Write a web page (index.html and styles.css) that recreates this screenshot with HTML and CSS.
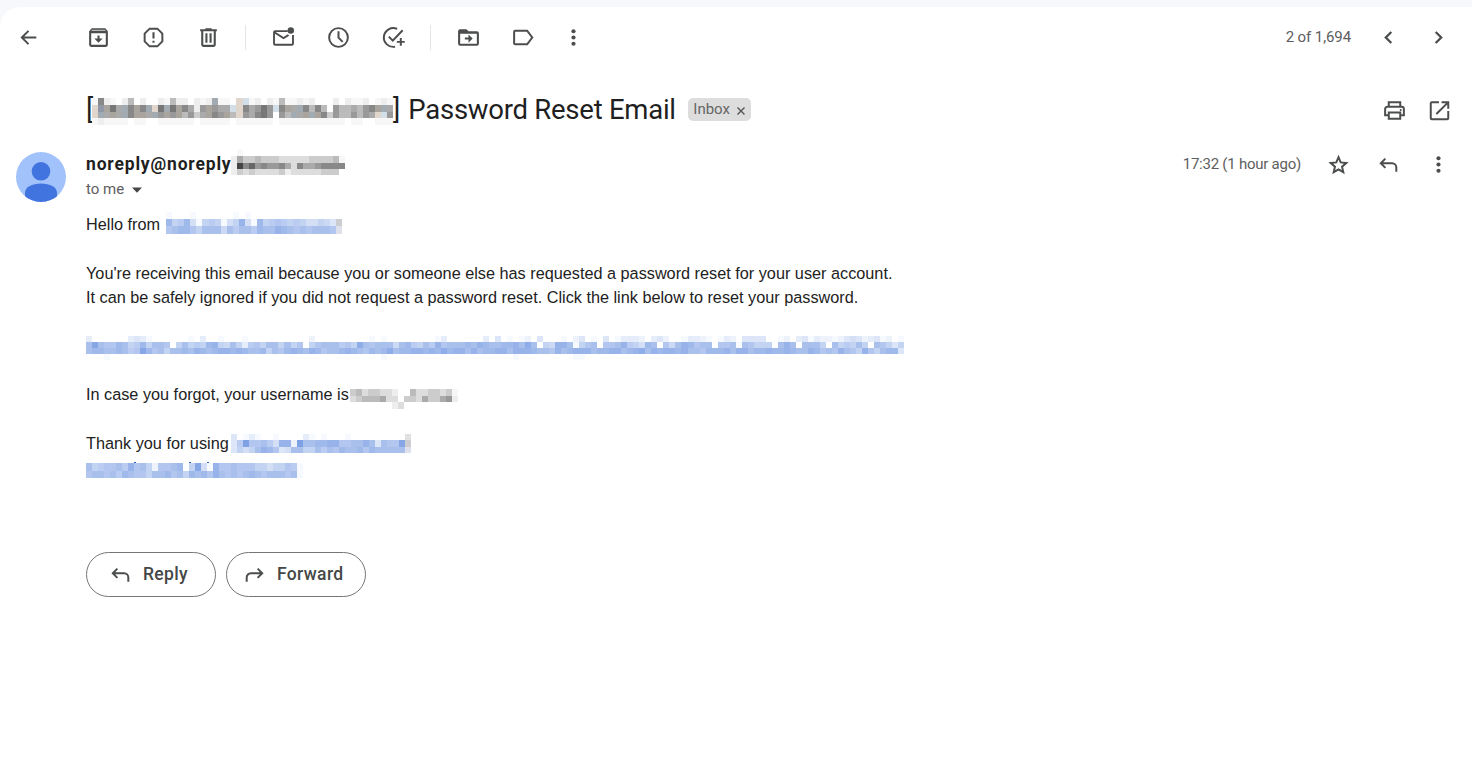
FILE: index.html
```html
<!DOCTYPE html>
<html lang="en">
<head>
<meta charset="utf-8">
<title>Password Reset Email</title>
<link rel="stylesheet" href="styles.css">
</head>
<body>
<main class="panel">
  <div class="toolbar">
    <svg class="icon back" viewBox="0 0 24 24"><path class="ln" d="M19.500 12H5.500M12 5.600 5.600 12l6.400 6.400"/></svg>
    <svg class="icon" viewBox="0 0 24 24"><path d="M5.500 3h13L21 6v13a2 2 0 0 1-2 2H5a2 2 0 0 1-2-2V6zM5 8v11h14V8zM11 10h2v3h3l-4 4-4-4h3z" fill-rule="evenodd"/><path d="M5.800 4.600h12.400l.8 1.200H5z" fill="#b5b8b5"/></svg>
    <svg class="icon" viewBox="0 0 24 24"><path class="ln" d="M8.300 3.500h7.400l4.800 4.800v7.400l-4.800 4.800H8.300l-4.800-4.800V8.300z"/><path d="M11 7h2v6h-2zM11 15h2v2h-2z"/></svg>
    <svg class="icon" viewBox="0 0 24 24"><path d="M9 3h6v1h5v2h-1v13a2 2 0 0 1-2 2H7a2 2 0 0 1-2-2V6H4V4h5zM7 6v13h10V6zM9 8h2v9H9zM13 8h2v9h-2z" fill-rule="evenodd"/></svg>
    <span class="sep"></span>
    <svg class="icon" viewBox="0 0 24 24"><path d="M16 5H4a2 2 0 0 0-2 2v11a2 2 0 0 0 2 2h16a2 2 0 0 0 2-2V9.500h-1.800V18H3.800V8.500L12 13.600l5.500-3.400-1.300-1.300L12 11.500 4.500 6.800H16z"/><circle cx="19" cy="5.200" r="3.100"/></svg>
    <svg class="icon" viewBox="0 0 24 24"><circle class="ln" cx="12" cy="12" r="9"/><path class="ln" d="M12 6v6.200l4 4"/></svg>
    <svg class="icon" viewBox="0 0 24 24"><path class="ln" d="M15.500 3.800A9 9 0 1 0 13.500 20.800M7.500 11.200l3.800 3.800L20.800 5"/><path class="ln" d="M19 12.500v7.500M15.200 16.200h7.600"/></svg>
    <span class="sep"></span>
    <svg class="icon" viewBox="0 0 24 24"><path d="M4 4h6l2 2h8a2 2 0 0 1 2 2v10a2 2 0 0 1-2 2H4a2 2 0 0 1-2-2V6a2 2 0 0 1 2-2zM4 8.500V18h16V8.500zM12 9l4 4-4 4v-3H8.500v-2H12z" fill-rule="evenodd"/></svg>
    <svg class="icon" viewBox="0 0 24 24"><path class="ln" d="M4 5.500h11.500l4.900 6.500-4.900 6.500H4a1 1 0 0 1-1-1v-11a1 1 0 0 1 1-1z"/></svg>
    <svg class="icon more" viewBox="0 0 24 24"><circle cx="12" cy="6" r="2"/><circle cx="12" cy="12" r="2"/><circle cx="12" cy="18" r="2"/></svg>
    <span class="count">2 of 1,694</span>
    <svg class="icon" viewBox="0 0 24 24"><path class="chev" d="M14.700 6.700 9.400 12l5.300 5.300"/></svg>
    <svg class="icon next" viewBox="0 0 24 24"><path class="chev" d="m9.300 6.700 5.300 5.300-5.300 5.300"/></svg>
  </div>

  <div class="subject">
    <h1><span>[</span><svg class="mosaic m-title" data-mosaic="title"></svg><span>]</span><span class="words">Password Reset Email</span></h1>
    <span class="chip"><span>Inbox</span><svg viewBox="0 0 10 10"><path d="m1.500 1.500 7 7m0-7-7 7"/></svg></span>
    <svg class="icon print" viewBox="0 0 24 24"><path class="ln" d="M6.500 8V4h11v4M6.500 16.500H3V10.500a2 2 0 0 1 2-2h14a2 2 0 0 1 2 2v6h-3.500M6.500 14h11v6h-11z"/><circle cx="18" cy="11.500" r="1"/></svg>
    <svg class="icon" viewBox="0 0 24 24"><path class="ln" d="M11.500 4H4.600a1 1 0 0 0-1 1v14.400a1 1 0 0 0 1 1h14.800a1 1 0 0 0 1-1V12.500M14 4h6.400v6.300M20 4.400 9 15.400"/></svg>
  </div>

  <div class="sender">
    <svg class="avatar" viewBox="0 0 50 50"><defs><clipPath id="disc"><circle cx="25" cy="25" r="25"/></clipPath></defs><g clip-path="url(#disc)"><path fill="#a1c2fa" d="M0 0h50v50H0z"/><circle cx="25" cy="19.300" r="9.300" fill="#4274e0"/><path fill="#4274e0" d="M9 50V41c0-6 7-9.500 16-9.500S41 35 41 41v9z"/></g></svg>
    <div class="who">
      <div class="from"><strong>noreply@noreply</strong><svg class="mosaic m-sender" data-mosaic="sender"></svg></div>
      <div class="to"><span>to me</span><svg viewBox="0 0 10 6"><path d="M0 .5h10L5 5.700z"/></svg></div>
    </div>
    <span class="time">17:32 (1 hour ago)</span>
    <svg class="icon star" viewBox="0 0 24 24"><path class="ln" d="m12 5 2.100 5 5.400.500-4.100 3.600 1.200 5.300L12 16.600l-4.600 2.800 1.200-5.300-4.100-3.600 5.400-.500z"/></svg>
    <svg class="icon" viewBox="0 0 24 24"><path class="ln" d="M9 6.400 4.600 10.800 9 15.200M4.900 10.800H15.500a4 4 0 0 1 4 4V19"/></svg>
    <svg class="icon" viewBox="0 0 24 24"><circle cx="12" cy="6" r="2"/><circle cx="12" cy="12" r="2"/><circle cx="12" cy="18" r="2"/></svg>
  </div>

  <div class="message">
    <p><span class="lead-hello">Hello from</span><svg class="mosaic m-hello" data-mosaic="hello"></svg></p>
    <p></p>
    <p>You're receiving this email because you or someone else has requested a password reset for your user account.</p>
    <p>It can be safely ignored if you did not request a password reset. Click the link below to reset your password.</p>
    <p></p>
    <p><svg class="mosaic m-link" data-mosaic="link"></svg></p>
    <p></p>
    <p><span class="lead-user">In case you forgot, your username is</span><svg class="mosaic m-user" data-mosaic="user"></svg></p>
    <p></p>
    <p><span class="lead-thanks">Thank you for using</span><svg class="mosaic m-thanks" data-mosaic="thanks"></svg></p>
    <p><svg class="mosaic m-site" data-mosaic="site"></svg></p>
  </div>

  <div class="actions">
    <button class="reply"><svg class="icon" viewBox="0 0 24 24"><path class="ln" d="M9 6.400 4.600 10.800 9 15.200M4.900 10.800H15.500a4 4 0 0 1 4 4V19"/></svg><span>Reply</span></button>
    <button class="forward"><svg class="icon" viewBox="0 0 24 24"><path class="ln" d="m15 6.400 4.400 4.400-4.400 4.400M19.100 10.800H8.500a4 4 0 0 0-4 4V19"/></svg><span>Forward</span></button>
  </div>
</main>
<script src="mosaic.js"></script>
</body>
</html>
```
FILE: styles.css
```css
* { box-sizing: border-box; }
body {
  margin: 0;
  padding-top: 7px;
  height: 777px;
  overflow: hidden;
  background: #f6f8fc;
  color: #1f1f1f;
  font-family: Roboto, "Open Sans", sans-serif;
}
.panel { height: 770px; background: #fff; border-top-left-radius: 20px; }
.icon { width: 25px; height: 25px; flex: none; fill: #4b4e4d; }
.ln { fill: none; stroke: #4b4e4d; stroke-width: 1.9; }
.chev { fill: none; stroke: #4b4e4d; stroke-width: 2.2; }
.mosaic { display: block; flex: none; }

.toolbar { display: flex; align-items: center; height: 61px; padding: 0 21px 0 16px; gap: 30px; }
.toolbar .back { margin-right: 15px; }
.sep { width: 1px; height: 25px; margin: 0 -5px 0 -6px; background: #e3e6e5; }
.toolbar .more { margin-left: -5px; }
.count, .time { font-size: 15px; color: #5e5e5e; white-space: nowrap; }
.count { margin-left: auto; margin-right: -5px; letter-spacing: -.1px; padding-bottom: 1px; }
.toolbar .next { margin-left: -5px; }

.subject { display: flex; align-items: center; height: 70px; padding: 15px 20px 0 86px; }
h1 { display: flex; align-items: center; margin: -2px 0 0; height: 34px; font-size: 27.5px; font-weight: 400; line-height: 34px; white-space: nowrap; }
h1 > span:first-child { width: 6px; }
.m-title { margin-top: 4px; }
.words { margin-left: 8px; width: 280px; letter-spacing: -.25px; }
.chip { display: flex; align-items: center; height: 23px; width: 63px; margin-top: -2px; padding: 0 5px; border-radius: 5px; background: #ddd; color: #666; font-size: 15px; line-height: 22px; justify-content: space-between; }
.chip span { padding-bottom: 1px; }
.chip svg { width: 10px; height: 10px; margin-top: 2px; fill: none; stroke: #555; stroke-width: 1.4; }
.print { margin-left: auto; margin-right: 20px; }

.sender { display: flex; height: 74px; padding: 14px 21px 0 16px; }
.avatar { width: 50px; height: 50px; flex: none; }
.who { margin-left: 20px; }
.from { display: flex; height: 25px; }
.from strong { width: 145px; font-size: 17.5px; line-height: 24px; font-weight: 700; letter-spacing: .83px; }
.m-sender { margin-top: -2px; }
.to { display: flex; align-items: center; height: 24px; font-size: 15px; color: #5e5e5e; }
.to span { width: 46px; }
.to svg { width: 10px; height: 6px; fill: #444746; margin-top: 1px; }
.time { margin-left: auto; line-height: 24px; letter-spacing: -.24px; }
.time ~ .icon { margin-left: 25px; }

.message { height: 340px; padding: 0 86px; font-family: "Liberation Sans", Arial, sans-serif; font-size: 16.25px; color: #222; }
.message p { display: flex; margin: 0; height: 24.3px; line-height: 24.3px; white-space: nowrap; }
.lead-hello { width: 74px; }
.lead-user { width: 264px; line-height: 25.5px; }
.lead-thanks { width: 145px; }
.m-link { margin-top: 2.500px; }
.m-user { margin-top: 6.900px; }
.m-thanks { margin-top: 3.300px; }
.m-site { margin-top: 7px; }

.actions { display: flex; gap: 10px; padding-left: 86px; }
.actions button { display: flex; align-items: center; height: 45px; padding: 0 0 0 21px; border: 1px solid #747775; border-radius: 23px; background: #fff; color: #444746; font: 500 17.5px Roboto, sans-serif; letter-spacing: .35px; }
.reply { width: 130px; }
.forward { width: 140px; }
.actions .forward { padding-left: 15px; }
.actions .icon { margin-right: 10px; }
.actions span { padding-bottom: 2px; }
```
FILE: mosaic.js
```js
// Pixelated blocks that cover private text.
// Hex digits run from darkest (0) to white (f); capitals are fixed tints.
const tints = {
  P: '#e0d6cb', S: '#d3dfe8', W: '#aaa49e', C: '#a2abb2', Q: '#9098a8',
  n: '#f7f7f7', G: '#e1e1e1', H: '#cccdd1', I: '#dee1ec', K: '#2f5fc4'
};
const mosaics = {
  title: { hue: 'gray', cell: 6.02, heights: [7, 7, 6, 7], rows: [
    'n8enfebfeffenbeefeneCnnfPSnefenbnnenefffefennefnen',
    'PQW7aC8W8CP7C7W8ae9W9aaSP8a979S8WaC8b8bf9bbab98WCa',
    'PCaWaC8WWaC9W9Wb9caW89WbP9a879f9bCaWCW8c9bb9b9aPS9',
    'nennnnfnnffnnnnnnfnnnnnfnnnnnnfnnnnnnnnnnnfnnffnnn'] },
  sender: { hue: 'gray', cell: 6, heights: [6, 7, 6, 6], rows: [
    'fnfffffffffffffffff',
    'eaccbcccdddddccccbn',
    'e48698998ad8aa98888e',
    'ecdcddddcedddddcccf'] },
  hello: { hue: 'blue', cell: 6.067, heights: [7, 7, 8], rows: [
    'fefffeffffffefefffffffffffffff',
    'f4874ae878ea83ae48767878aa89bH',
    'f6544685559575574553456565556I'] },
  link: { hue: 'blue', cell: 6.015, heights: [6, 6, 6, 6], rows: [
    'cffffffcbceffffffefcffefffeffffffffffdfffffffffefeffffffffecffffffcfbfefedfbfffefdbfefbfecccdfcbdffeccdefecdfbbbbffedfcbecddedbabdcbedfe',
    '51566458748556f85878438958c768558586f86555768256555954785736555453455443525f89335e865f665378a45f69534655f665e56888f535f5558f587858f568b8',
    '544554576146585545345433434554856434534655434564542544334342433535443353334556354333544335432534334355644435335443443455346563568368544b',
    'fffefffffffffffffffffffffffffffffffffffffffffffffefffffffffffffffffffffefffffffffeeffffffffffffffffffffffffffffffffffffffffffffffffffffff'] },
  user: { hue: 'gray', cell: 6, heights: [7, 6, 7], rows: [
    'cbdccddeffbddccdcn', 'dcbbbaddfccdacca9e', 'fffffffedfffffffff'] },
  thanks: { hue: 'blue', cell: 6, heights: [6, 7, 6], rows: [
    'bfeceffeffffcefefffefffffffffG', 'b706657a33d0554433665535b5661H', '8a85346ba5588575645546455555I'.padStart(30, 'b')] },
  site: { hue: 'blue', cell: 6.04, heights: [1, 8, 7], rows: [
    'ffffffffKffffffffKffKffffffffffffff', '58766573658d6654f81ae366566688a8867e', '65565745668554658454635656545655565e'] }
};

function tone(ch, hue) {
  if (tints[ch]) return tints[ch];
  const v = parseInt(ch, 16) / 15;
  const base = hue === 'blue' ? [126, 160, 228] : [0, 0, 0];
  return `rgb(${base.map(c => Math.round(c + (255 - c) * v)).join(',')})`;
}

document.querySelectorAll('[data-mosaic]').forEach(svg => {
  const { hue, cell, heights, rows } = mosaics[svg.dataset.mosaic];
  const count = rows[rows.length - 1].length;
  svg.setAttribute('width', Math.round(cell * count));
  svg.setAttribute('height', heights.reduce((a, b) => a + b));
  svg.setAttribute('shape-rendering', 'crispEdges');
  let y = 0;
  svg.innerHTML = rows.map((row, i) => {
    const cells = [...row].slice(0, count).map((ch, x) => ch === 'f' ? '' :
      `<rect x="${x * cell}" y="${y}" width="${ch === 'K' ? 2 : cell}" height="${heights[i]}" fill="${tone(ch, hue)}"/>`).join('');
    y += heights[i];
    return cells;
  }).join('');
});
```
